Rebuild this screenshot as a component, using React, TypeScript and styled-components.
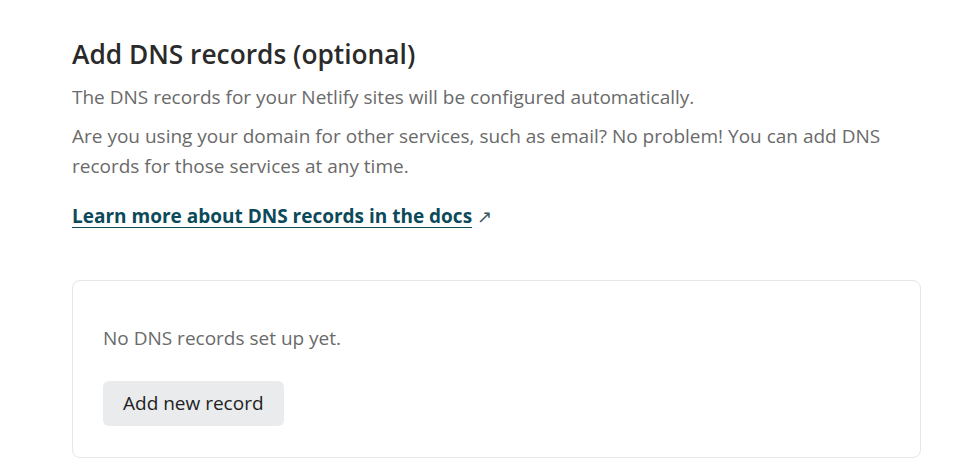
import React from "react";
import styled, { createGlobalStyle } from "styled-components";

const Global = createGlobalStyle`
  html, body {
    margin: 0;
    padding: 0;
    background: #fff;
  }
  body {
    font-family: "Open Sans", "Noto Sans", "Liberation Sans", sans-serif;
  }
`;

const Page = styled.div`
  padding: 38px 37px 18px 72px;
`;

const Title = styled.h2`
  margin: 0 0 12px 0;
  font-size: 26.3px;
  font-weight: 600;
  line-height: 32px;
  color: #2a2a2a;
`;

const Text = styled.p`
  margin: 0 0 9px 0;
  font-size: 19px;
  line-height: 30px;
  color: #6a6a6a;
  max-width: 849px;
`;

const DocLink = styled.a`
  display: inline-block;
  margin-top: 11px;
  font-size: 19px;
  font-weight: 700;
  line-height: 30px;
  color: #0b4a5a;
  text-decoration: underline;
  text-underline-offset: 4px;
`;

const Arrow = styled.span`
  margin-left: 5px;
  font-size: 18px;
  color: #3b5560;
`;

const Card = styled.section`
  margin-top: 49px;
  border: 1px solid #e6e6e6;
  border-radius: 8px;
  padding: 45px 30px 31px 30px;
`;

const Empty = styled.p`
  margin: 0 0 31px 0;
  font-size: 19px;
  line-height: 24px;
  color: #6a6a6a;
`;

const Button = styled.button`
  font-family: inherit;
  font-size: 19px;
  line-height: 25px;
  color: #222;
  background: #e9ebed;
  border: none;
  border-radius: 6px;
  padding: 10px 20px;
  cursor: pointer;
`;

export default function App() {
  return (
    <>
      <Global />
      <Page>
        <Title>Add DNS records (optional)</Title>
        <Text>The DNS records for your Netlify sites will be configured automatically.</Text>
        <Text>
          Are you using your domain for other services, such as email? No problem! You can add DNS
          records for those services at any time.
        </Text>
        <DocLink href="#">Learn more about DNS records in the docs</DocLink>
        <Arrow>↗</Arrow>
        <Card>
          <Empty>No DNS records set up yet.</Empty>
          <Button>Add new record</Button>
        </Card>
      </Page>
    </>
  );
}
